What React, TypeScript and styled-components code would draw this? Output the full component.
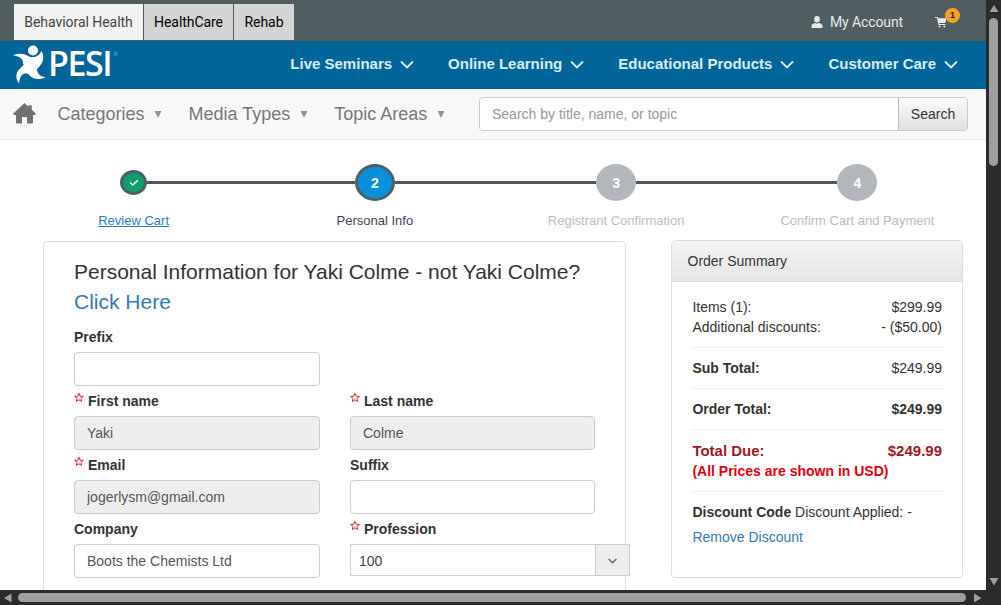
import React from "react";
import styled, { createGlobalStyle } from "styled-components";

const GlobalStyle = createGlobalStyle`
  * { box-sizing: border-box; }
  body { margin: 0; background: #2b2b2b; font: 14px/20px "Liberation Sans", Arial, sans-serif; color: #333; overflow: hidden; }
  input, button { font: inherit; }
`;

const Window = styled.div`
  width: 1001px;
  height: 605px;
  display: grid;
  grid-template-columns: 986px 15px;
  grid-template-rows: 590px 15px;
  background: #2b2b2b;
`;
const Page = styled.div`
  background: #fff;
  overflow: hidden;
`;

/* Scroll bars */
const VerticalBar = styled.div`
  display: flex;
  flex-direction: column;
  align-items: center;
  justify-content: space-between;
  padding: 4px 0 3px;
`;
const HorizontalBar = styled.div`
  display: flex;
  align-items: center;
  gap: 5px;
  padding-left: 3px;
`;
const VerticalThumb = styled.div`
  width: 9px;
  height: 148px;
  border-radius: 5px;
  background: #9f9f9f;
  margin: 4px 0 auto;
`;
const HorizontalThumb = styled.div`
  width: 948px;
  height: 9px;
  border-radius: 5px;
  background: #9f9f9f;
  margin: 0 2px 0 0;
`;

/* Header */
const TopBar = styled.div`
  height: 41px;
  background: #505d61;
  padding: 4px 26px 0 14px;
  display: flex;
  justify-content: space-between;
`;
const Tabs = styled.div`
  display: flex;
  gap: 1px;
`;
const Tab = styled.a<{ $active?: boolean; $width: number }>`
  width: ${(p) => p.$width}px;
  height: 36px;
  display: flex;
  align-items: center;
  justify-content: center;
  white-space: nowrap;
  background: ${(p) => (p.$active ? "#f2f2f2" : "#d4d4d4")};
  color: ${(p) => (p.$active ? "#444" : "#000")};
  font: 14px/20px Roboto, sans-serif;
  letter-spacing: -0.05px;
`;
const Account = styled.div`
  display: flex;
  align-items: center;
  height: 35px;
  color: #e8eaea;
  font: 14px/20px Roboto, sans-serif;
  letter-spacing: -0.1px;
`;
const AccountLabel = styled.span`
  margin: 0 32px 0 7px;
`;
const Cart = styled.span`
  position: relative;
  width: 25px;
  height: 20px;
  display: flex;
  align-items: center;
`;
const CartBadge = styled.span`
  position: absolute;
  left: 10px;
  top: -4px;
  width: 15px;
  height: 15px;
  border-radius: 50%;
  background: #f9a11f;
  color: #222;
  font: bold 9px/15px "Liberation Sans", sans-serif;
  letter-spacing: 0;
  text-align: center;
`;
const BrandBar = styled.div`
  height: 48px;
  background: #006699;
  display: flex;
  align-items: center;
  justify-content: space-between;
  padding: 0 28px 2px 13px;
`;
const Logo = styled.div`
  display: flex;
  align-items: center;
  color: #fff;
`;
const Wordmark = styled.span`
  font: 600 34px/40px "Open Sans", sans-serif;
  letter-spacing: -1.4px;
  margin: -3px 0 0 2px;
`;
const Registered = styled.sup`
  font: 6px/8px "Liberation Sans", sans-serif;
  margin: -20px 0 0 2px;
  color: #8fbcd6;
`;
const MainNav = styled.nav`
  display: flex;
  gap: 34px;
`;
const MainNavItem = styled.a`
  display: flex;
  align-items: center;
  gap: 8px;
  color: #d9ebf6;
  font-weight: bold;
  font-size: 15px;
`;
const SubBar = styled.div`
  height: 51px;
  background: #f8f8f8;
  border-bottom: 1px solid #e7e7e7;
  display: flex;
  align-items: center;
  padding: 0 18px 1px 13px;
`;
const SubNav = styled.nav`
  display: flex;
  gap: 26.5px;
  margin-left: 21.5px;
  flex: 1;
`;
const SubNavItem = styled.a`
  display: flex;
  align-items: center;
  gap: 9.5px;
  font-size: 18px;
  color: #777;
`;
const SearchBox = styled.form`
  width: 489px;
  height: 34px;
  display: flex;
  border: 1px solid #ccc;
  border-radius: 4px;
  overflow: hidden;
`;
const SearchInput = styled.input`
  flex: 1;
  min-width: 0;
  border: 0;
  padding: 0 12px;
  background: #fff;
  &::placeholder { color: #999; }
`;
const SearchButton = styled.button`
  width: 69px;
  border: 0;
  border-left: 1px solid #bbb;
  padding: 0;
  color: #333;
  background: linear-gradient(#fbfbfb, #e0e0e0);
`;

/* Checkout steps */
const Steps = styled.ol`
  list-style: none;
  margin: 0;
  padding: 24px 9px 0 13px;
  display: grid;
  grid-template-columns: repeat(4, 241.25px);
  height: 100px;
`;
const Step = styled.li`
  display: flex;
  flex-direction: column;
  align-items: center;
`;
const Track = styled.div<{ $before?: boolean; $after?: boolean }>`
  width: 100%;
  height: 37px;
  display: flex;
  align-items: center;
  &::before, &::after { content: ""; flex: 1; height: 3px; }
  &::before { background: ${(p) => (p.$before ? "#54565b" : "transparent")}; }
  &::after { background: ${(p) => (p.$after ? "#54565b" : "transparent")}; }
`;
const Bubble = styled.div<{ $kind: "done" | "current" | "todo" }>`
  width: ${(p) => (p.$kind === "done" ? 27 : 40)}px;
  height: ${(p) => (p.$kind === "done" ? 25 : 37)}px;
  border-radius: 50%;
  border: ${(p) => (p.$kind === "todo" ? "0" : "3px solid #4d6068")};
  background: ${(p) => ({ done: "#0f9f6e", current: "#0a8fdc", todo: "#b3b6ba" })[p.$kind]};
  color: #fff;
  font-weight: bold;
  font-size: 14px;
  display: flex;
  align-items: center;
  justify-content: center;
`;
const StepLabel = styled.span<{ $kind: "done" | "current" | "todo" }>`
  margin-top: 10px;
  font-size: 13px;
  line-height: 20px;
  white-space: nowrap;
  color: ${(p) => ({ done: "#1f80c0", current: "#3a4656", todo: "#b9bcc0" })[p.$kind]};
  text-decoration: ${(p) => (p.$kind === "done" ? "underline" : "none")};
`;

/* Content */
const Content = styled.main`
  display: flex;
  align-items: flex-start;
  gap: 45px;
  padding-left: 43px;
`;
const FormCard = styled.section`
  width: 583px;
  height: 420px;
  margin-top: 1px;
  border: 1px solid #ddd;
  border-radius: 4px;
  padding: 15px 30px;
`;
const Heading = styled.h1`
  margin: 0 -20px 10px 0;
  font-size: 21px;
  line-height: 30px;
  font-weight: normal;
`;
const Link = styled.a`
  color: #337ab7;
`;
const Fields = styled.div`
  display: grid;
  grid-template-columns: 246px 245px;
  column-gap: 30px;
  row-gap: 5px;
`;
const Field = styled.div<{ $wide?: boolean }>`
  display: flex;
  flex-direction: column;
  gap: 5px;
  grid-column: ${(p) => (p.$wide ? "1 / -1" : "auto")};
`;
const FieldLabel = styled.label`
  height: 20px;
  font-weight: bold;
  display: flex;
  gap: 4px;
`;
const TextInput = styled.input<{ $width: string }>`
  width: ${(p) => p.$width};
  height: 34px;
  border: 1px solid #ccc;
  border-radius: 4px;
  padding: 0 12px;
  color: #555;
  background: ${(p) => (p.readOnly ? "#eee" : "#fff")};
`;
const Select = styled.div`
  position: relative;
  width: 280px;
  height: 32px;
  border: 1px solid #ccc;
  background: #fff;
  display: flex;
  justify-content: space-between;
  color: #444;
  line-height: 32px;
  padding-left: 8px;
`;
const SelectArrow = styled.span`
  width: 34px;
  border-left: 1px solid #ccc;
  background: #eee;
  display: flex;
  align-items: center;
  justify-content: center;
`;
const Summary = styled.aside`
  width: 292px;
  height: 338px;
  border: 1px solid #ddd;
  border-radius: 4px;
  overflow: hidden;
`;
const SummaryHead = styled.div`
  height: 41px;
  padding: 0 15.5px;
  line-height: 40px;
  border-bottom: 1px solid #ddd;
  background: linear-gradient(#f5f5f5, #e5e5e5);
`;
const SummaryBody = styled.div`
  padding: 15px 18px 0 20px;
`;
const Group = styled.div`
  padding: 0 2px 10px 0.4px;
  margin-bottom: 10px;
  border-bottom: 1px solid #eee;
`;
const Line = styled.div<{ $bold?: boolean; $due?: boolean }>`
  display: flex;
  justify-content: space-between;
  height: ${(p) => (p.$due ? 21 : 20)}px;
  line-height: ${(p) => (p.$due ? 22 : 20)}px;
  font-weight: ${(p) => (p.$bold ? "bold" : "normal")};
  font-size: ${(p) => (p.$due ? 15 : 14)}px;
  color: ${(p) => (p.$due ? "#a2191f" : "#333")};
`;
const Currency = styled.div`
  font-weight: bold;
  color: #e3000b;
  height: 20px;
`;
const Discount = styled.div`
  padding-left: 0.4px;
  line-height: 20px;
  margin-bottom: 5px;
`;

const Chevron = ({ size = 14, color = "#d9ebf6", weight = 1.8 }) => (
  <svg width={size} height={size} viewBox="0 0 14 14" fill="none" stroke={color} strokeWidth={weight} strokeLinecap="round">
    <path d="M1.500 5 7 10.500l5.500-5.500" />
  </svg>
);
const Triangle = ({ d }: { d: string }) => (
  <svg width="10" height="10" viewBox="0 0 10 10" fill="#9f9f9f"><path d={d} /></svg>
);
const Caret = () => (
  <svg width="8" height="8" viewBox="0 0 8 8" fill="#929292"><path d="M.5 1h7L4 8z" /></svg>
);
const Star = () => (
  <svg width="10" height="12" viewBox="0 0 10 12" fill="none" stroke="#d9272e" strokeWidth="1">
    <path d="M5 2.300 6.200 5.200 9.400 5.400 6.900 7.400 7.700 10.500 5 8.800 2.300 10.500 3.100 7.400.6 5.400 3.800 5.200Z" />
  </svg>
);

const navItems = ["Live Seminars", "Online Learning", "Educational Products", "Customer Care"];
const subItems = ["Categories", "Media Types", "Topic Areas"];

type FormField = { label: string; value?: string; required?: boolean; locked?: boolean; wide?: boolean };
const fields: FormField[] = [
  { label: "Prefix", wide: true },
  { label: "First name", value: "Yaki", required: true, locked: true },
  { label: "Last name", value: "Colme", required: true, locked: true },
  { label: "Email", value: "jogerlysm@gmail.com", required: true, locked: true },
  { label: "Suffix" },
  { label: "Company", value: "Boots the Chemists Ltd" },
];

export default function App() {
  return (
    <Window>
      <GlobalStyle />
      <Page>
        <TopBar>
          <Tabs>
            <Tab $active $width={129}>Behavioral Health</Tab>
            <Tab $width={89}>HealthCare</Tab>
            <Tab $width={60}>Rehab</Tab>
          </Tabs>
          <Account>
            <svg width="12" height="12" viewBox="0 0 12 12" fill="#e8eaea">
              <ellipse cx="6" cy="3.300" rx="2.800" ry="3.200" />
              <path d="M.5 12V9.800C.5 8.300 2.500 7.300 4.200 7a3.500 3.500 0 0 0 3.600 0c1.700.3 3.700 1.300 3.700 2.800V12z" />
            </svg>
            <AccountLabel>My Account</AccountLabel>
            <Cart>
              <svg width="12" height="12" viewBox="0 0 12 12" fill="#e8eaea">
                <path d="M0 1h2.600l.4 1.200h8.500L10.300 7H4.200l.2 1h6v1H3.500L2 2H0z" />
                <circle cx="4.500" cy="10.500" r="1" /><circle cx="9.300" cy="10.500" r="1" />
              </svg>
              <CartBadge>1</CartBadge>
            </Cart>
          </Account>
        </TopBar>
        <BrandBar>
          <Logo>
            <svg width="33" height="40" viewBox="0 0 33 40" fill="#fff">
              <circle cx="20" cy="6.500" r="5" />
              <path d="M0 11.500C5 8.500 12 9.500 17 13c4.500 1.500 9.500-1.500 11.500-6 3.500 6 2 12-4.500 18 0 4.500 3.500 8 8.500 8C27 36.500 19 35.500 15 29.500 9.500 28.500 7 32 6 39.500 1.500 33 2.500 27 11 21 11 15.500 7 12 0 11.500z" />
              <path d="M9 13h15v11l-4 7-8-2z" />
            </svg>
            <Wordmark>PESI</Wordmark>
            <Registered>®</Registered>
          </Logo>
          <MainNav>
            {navItems.map((n) => <MainNavItem key={n}>{n}<Chevron /></MainNavItem>)}
          </MainNav>
        </BrandBar>
        <SubBar>
          <svg width="23" height="21" viewBox="0 0 23 21" fill="#707070">
            <path d="M11.500 0 15.500 3.700V2.200h3.300v4.600L23 10.800l-1.200 1.200H20v7.500q0 1-1 1h-5V14H9v6.500H4q-1 0-1-1V12H1.200L0 10.800z" />
          </svg>
          <SubNav>
            {subItems.map((n) => <SubNavItem key={n}>{n}<Caret /></SubNavItem>)}
          </SubNav>
          <SearchBox>
            <SearchInput placeholder="Search by title, name, or topic" />
            <SearchButton type="button">Search</SearchButton>
          </SearchBox>
        </SubBar>
        <Steps>
          <Step>
            <Track $after>
              <Bubble $kind="done">
                <svg width="10" height="7" viewBox="0 0 11 8" fill="none" stroke="#fff" strokeWidth="1.600"><path d="M1 4l3 3 6-5.500" /></svg>
              </Bubble>
            </Track>
            <StepLabel $kind="done">Review Cart</StepLabel>
          </Step>
          <Step>
            <Track $before $after><Bubble $kind="current">2</Bubble></Track>
            <StepLabel $kind="current">Personal Info</StepLabel>
          </Step>
          <Step>
            <Track $before $after><Bubble $kind="todo">3</Bubble></Track>
            <StepLabel $kind="todo">Registrant Confirmation</StepLabel>
          </Step>
          <Step>
            <Track $before><Bubble $kind="todo">4</Bubble></Track>
            <StepLabel $kind="todo">Confirm Cart and Payment</StepLabel>
          </Step>
        </Steps>
        <Content>
          <FormCard>
            <Heading>
              Personal Information for Yaki Colme - not Yaki Colme?<br /><Link>Click Here</Link>
            </Heading>
            <Fields>
              {fields.map((f) => (
                <Field key={f.label} $wide={f.wide}>
                  <FieldLabel>{f.required && <Star />}{f.label}</FieldLabel>
                  <TextInput $width={f.wide ? "246px" : "100%"} defaultValue={f.value} readOnly={f.locked} />
                </Field>
              ))}
              <Field>
                <FieldLabel><Star />Profession</FieldLabel>
                <Select>
                  100
                  <SelectArrow><Chevron size={9} color="#666" weight={2.200} /></SelectArrow>
                </Select>
              </Field>
            </Fields>
          </FormCard>
          <Summary>
            <SummaryHead>Order Summary</SummaryHead>
            <SummaryBody>
              <Group>
                <Line><span>Items (1):</span><span>$299.99</span></Line>
                <Line><span>Additional discounts:</span><span>- ($50.00)</span></Line>
              </Group>
              <Group><Line><b>Sub Total:</b><span>$249.99</span></Line></Group>
              <Group><Line $bold><span>Order Total:</span><span>$249.99</span></Line></Group>
              <Group>
                <Line $bold $due><span>Total Due:</span><span>$249.99</span></Line>
                <Currency>(All Prices are shown in USD)</Currency>
              </Group>
              <Discount><b>Discount Code</b> Discount Applied: -</Discount>
              <Discount><Link>Remove Discount</Link></Discount>
            </SummaryBody>
          </Summary>
        </Content>
      </Page>
      <VerticalBar>
        <Triangle d="M5 1l4.500 7H.5z" />
        <VerticalThumb />
        <Triangle d="M.5 1h9L5 8.500z" />
      </VerticalBar>
      <HorizontalBar>
        <Triangle d="M8.500.5v9L1 5z" />
        <HorizontalThumb />
        <Triangle d="M1 .5v9L8.500 5z" />
      </HorizontalBar>
    </Window>
  );
}
